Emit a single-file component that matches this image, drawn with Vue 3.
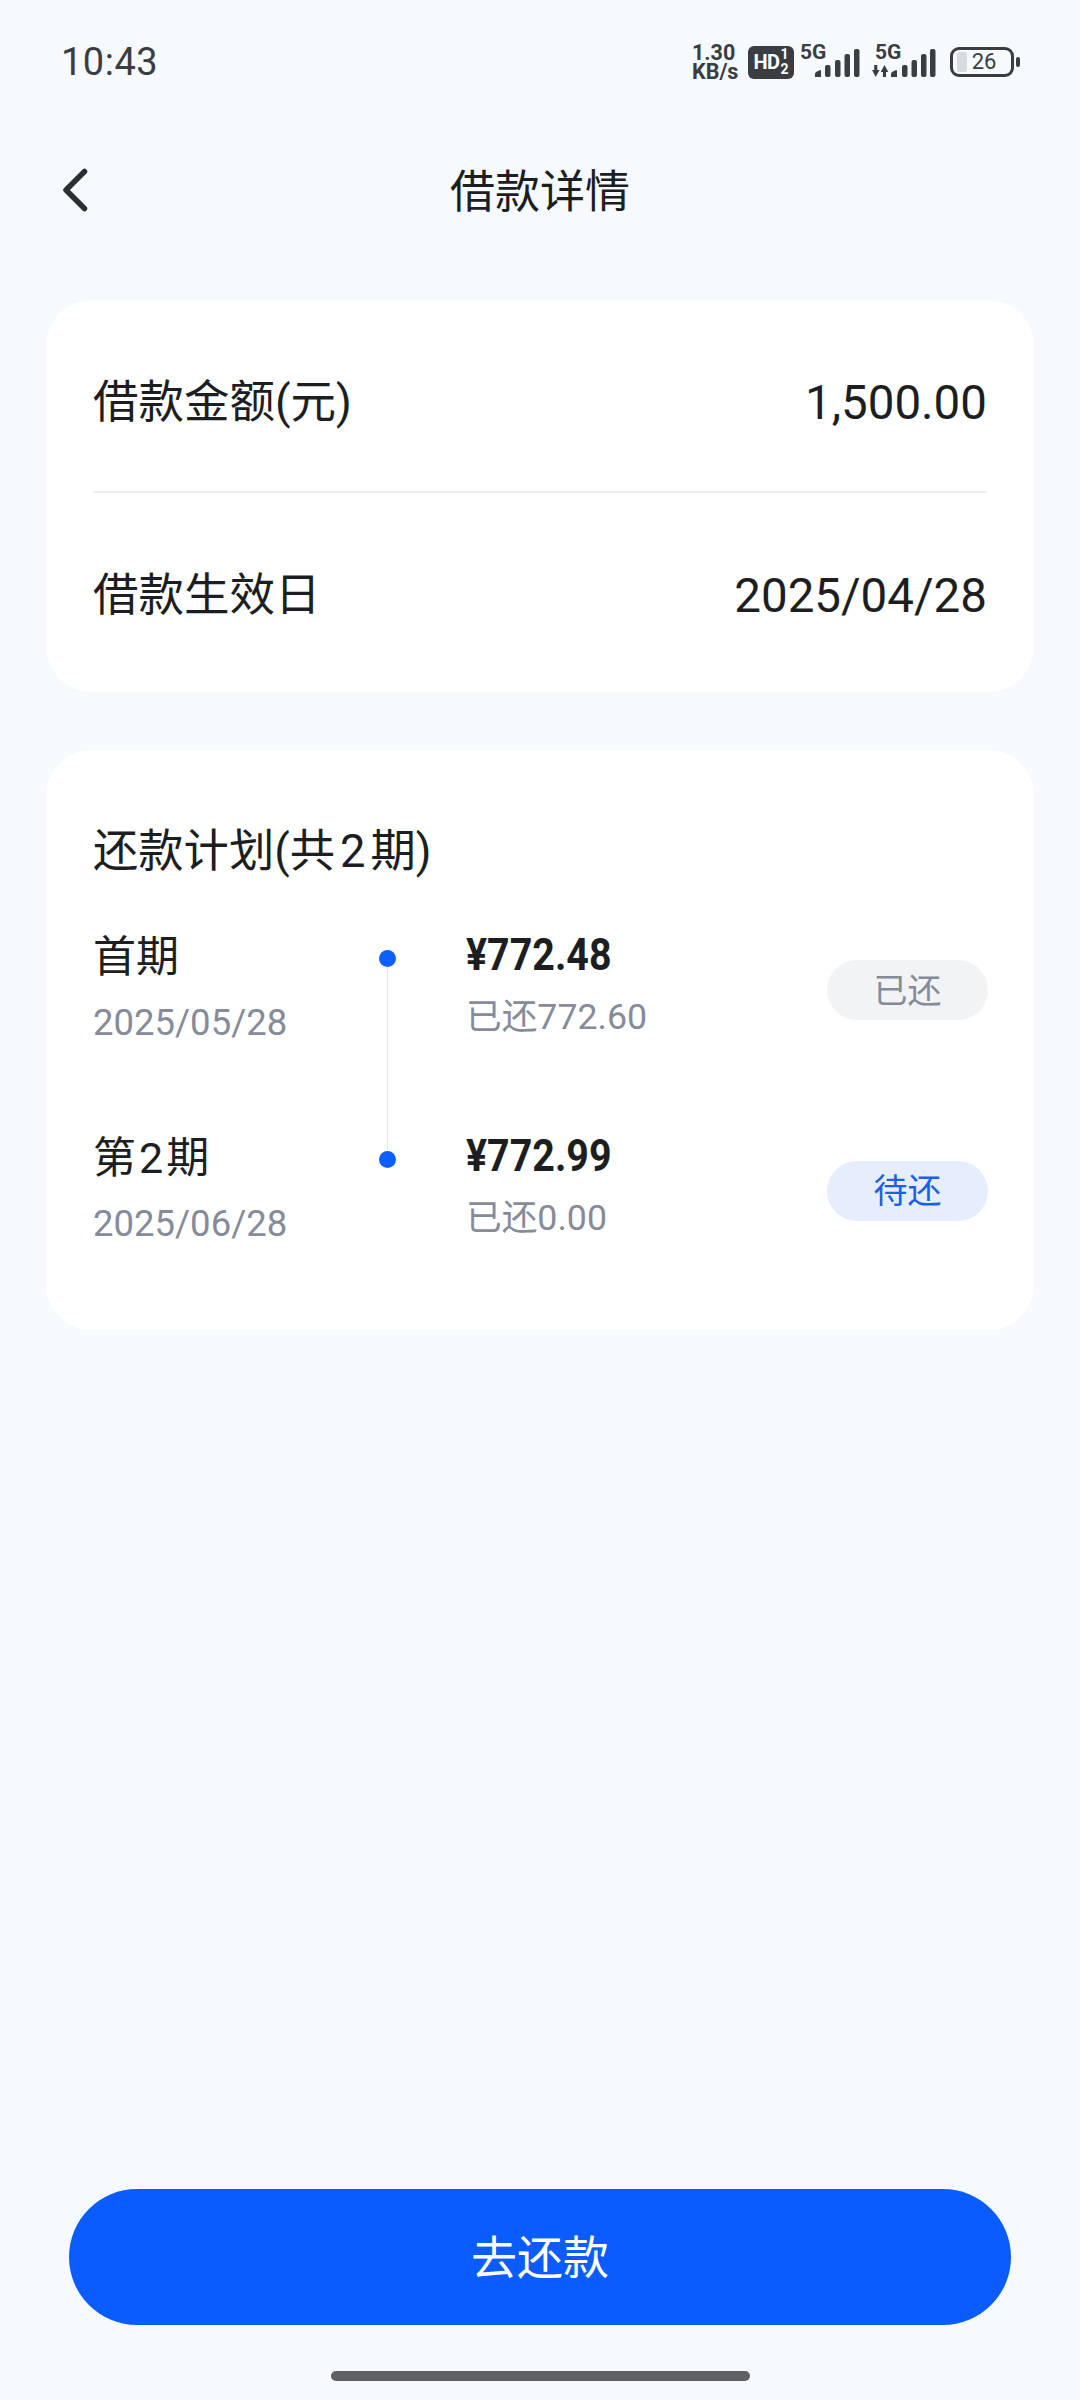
<template>
  <div class="page">
    <div class="status-bar">
      <span class="time">10:43</span>
      <div class="status-icons">
        <div class="speed"><span>1.30</span><span>KB/s</span></div>
        <div class="hd">
          <span class="hd-main">HD</span>
          <span class="hd-sub"><i>1</i><i>2</i></span>
        </div>
        <div class="signal">
          <span class="net">5G</span>
          <svg width="45" height="30" viewBox="0 0 45 30" class="bars">
            <path d="M0 30v-3q0-1.5 1.5-2.2l3-1.6q1.5-.6 1.5 1V30z" />
            <rect x="10" y="18" width="5.5" height="12" rx="2" />
            <rect x="20" y="13" width="5.5" height="17" rx="2" />
            <rect x="29.5" y="7" width="5.5" height="23" rx="2" />
            <rect x="39" y="2" width="5.5" height="28" rx="2" />
          </svg>
        </div>
        <div class="signal second">
          <span class="net">5G</span>
          <svg width="64" height="30" viewBox="0 0 64 30" class="bars">
            <path d="M2.2 18h3.1v5h2.2L3.7 30 0 23h2.2z" />
            <path d="M12.5 18l3.8 7h-2.3v5h-3.100v-5H8.700z" />
            <path d="M19 30v-3q0-1.5 1.5-2.2l3-1.6q1.5-.6 1.5 1V30z" />
            <rect x="30" y="18" width="5.5" height="12" rx="2" />
            <rect x="39.5" y="13" width="5.5" height="17" rx="2" />
            <rect x="49" y="7" width="5.5" height="23" rx="2" />
            <rect x="58" y="2" width="5.5" height="28" rx="2" />
          </svg>
        </div>
        <div class="battery">
          <div class="battery-body">
            <div class="battery-fill"></div>
            <span class="battery-num">26</span>
          </div>
          <div class="battery-cap"></div>
        </div>
      </div>
    </div>

    <div class="nav">
      <svg class="back" width="26" height="44" viewBox="0 0 26 44" fill="none">
        <path d="M22.5 3.5 L4 22 L22.5 40.5" stroke="#2b2e33" stroke-width="5.5" stroke-linecap="round" stroke-linejoin="round" />
      </svg>
      <span class="nav-title">借款详情</span>
    </div>

    <div class="card info-card">
      <div class="info-row first">
        <span class="info-label">借款金额(元)</span>
        <span class="info-value">1,500.00</span>
      </div>
      <div class="info-row">
        <span class="info-label">借款生效日</span>
        <span class="info-value">2025/04/28</span>
      </div>
    </div>

    <div class="card plan-card">
      <div class="plan-title">还款计划(共<span class="num-gap">2</span>期)</div>
      <div
        v-for="(item, i) in plans"
        :key="item.date"
        class="plan-row"
      >
        <div class="plan-left">
          <div class="plan-name">
            {{ item.prefix }}<span v-if="item.num" class="name-gap">{{ item.num }}</span>期
          </div>
          <div class="plan-date">{{ item.date }}</div>
        </div>
        <div class="plan-dot" :class="{ 'has-line': i < plans.length - 1 }"></div>
        <div class="plan-mid">
          <div class="plan-amount">{{ item.amount }}</div>
          <div class="plan-paid">{{ item.paid }}</div>
        </div>
        <div class="pill" :class="item.tone">{{ item.status }}</div>
      </div>
    </div>

    <div class="spacer"></div>

    <div class="footer">
      <button class="pay-btn">去还款</button>
    </div>
    <div class="home-bar"></div>
  </div>
</template>

<script setup>
const plans = [
  {
    prefix: "首",
    num: "",
    date: "2025/05/28",
    amount: "¥772.48",
    paid: "已还772.60",
    status: "已还",
    tone: "done",
  },
  {
    prefix: "第",
    num: "2",
    date: "2025/06/28",
    amount: "¥772.99",
    paid: "已还0.00",
    status: "待还",
    tone: "todo",
  },
];
</script>

<style>
html,
body {
  margin: 0;
  background: #f6faff;
}
</style>

<style scoped>
.page {
  height: 2400px;
  display: flex;
  flex-direction: column;
  background: #f6faff;
  font-family: Roboto, "Noto Sans CJK SC", sans-serif;
  color: #1c1e21;
  overflow: hidden;
}
.status-bar {
  height: 124px;
  flex: none;
  display: flex;
  align-items: center;
  justify-content: space-between;
  padding: 0 61px;
  padding-right: 60px;
  box-sizing: border-box;
}
.time {
  font-size: 38px;
  color: #3a3d42;
  letter-spacing: 0.5px;
}
.status-icons {
  display: flex;
  align-items: center;
  color: #3a3d42;
}
.speed {
  display: flex;
  flex-direction: column;
  font-size: 21.5px;
  font-weight: 700;
  line-height: 19px;
  width: 48px;
  margin-right: 8px;
  white-space: nowrap;
}
.hd {
  width: 46px;
  height: 33px;
  border-radius: 6px;
  background: #3a3d42;
  color: #fff;
  display: flex;
  align-items: center;
  justify-content: center;
  font-weight: 700;
  margin-right: 6px;
}
.hd-main {
  font-size: 20px;
  letter-spacing: -0.5px;
}
.hd-sub {
  display: flex;
  flex-direction: column;
  font-size: 14px;
  line-height: 15px;
  margin-left: 1px;
}
.hd-sub i {
  font-style: normal;
}
.signal {
  position: relative;
  width: 60px;
  height: 34px;
  margin-right: 12px;
}
.signal.second {
  width: 64px;
  margin-right: 14px;
}
.net {
  position: absolute;
  left: 0;
  top: -4px;
  font-size: 21px;
  font-weight: 700;
  line-height: 22px;
}
.signal.second .net {
  left: 3px;
}
.bars {
  position: absolute;
  right: 0;
  bottom: 2px;
  fill: #3a3d42;
}
.battery {
  display: flex;
  align-items: center;
  gap: 2px;
}
.battery-body {
  position: relative;
  width: 64px;
  height: 30px;
  border: 3px solid #3a3d42;
  border-radius: 9px;
  box-sizing: border-box;
  display: flex;
  align-items: center;
  justify-content: center;
}
.battery-fill {
  position: absolute;
  left: 4px;
  top: 2px;
  bottom: 2px;
  width: 10px;
  background: #d9dbe0;
  border-radius: 2px;
}
.battery-num {
  position: relative;
  font-size: 22px;
  font-weight: 400;
  line-height: 1;
  left: 2px;
}
.battery-cap {
  width: 4px;
  height: 10px;
  background: #3a3d42;
  border-radius: 2px;
}
.nav {
  position: relative;
  flex: none;
  height: 132px;
  display: flex;
  align-items: center;
  justify-content: center;
  padding-bottom: 3px;
  box-sizing: border-box;
}
.back {
  position: absolute;
  left: 62px;
  top: 44px;
}
.nav-title {
  font-size: 45px;
  color: #1c1e21;
}
.card {
  flex: none;
  margin: 0 46px;
  background: #fff;
  border-radius: 46px;
}
.info-card {
  margin-top: 44px;
  padding: 0 47px;
  height: 392px;
  box-sizing: border-box;
  display: flex;
  flex-direction: column;
}
.info-row {
  display: flex;
  align-items: flex-start;
  justify-content: space-between;
  padding-top: 73px;
  line-height: 60px;
}
.info-row.first {
  padding-bottom: 58px;
  border-bottom: 2px solid #eceef1;
}
.info-label {
  font-size: 45.5px;
}
.info-value {
  font-size: 47.5px;
}
.plan-card {
  margin-top: 58px;
  padding: 73px 47px 0;
  height: 580px;
  box-sizing: border-box;
}
.plan-title {
  font-size: 45.3px;
  line-height: 58px;
  margin-bottom: 47px;
}
.num-gap {
  margin: 0 5px;
}
.name-gap {
  margin: 0 3px;
}
.plan-row {
  display: flex;
  height: 200.5px;
}
.plan-left {
  width: 286px;
  flex: none;
}
.plan-name {
  font-size: 43px;
  line-height: 58px;
}
.plan-date {
  font-size: 36.5px;
  line-height: 50px;
  margin-top: 12px;
  color: #858b99;
}
.plan-dot {
  position: relative;
  flex: none;
  width: 17px;
  height: 17px;
  margin-top: 22px;
  margin-right: 70px;
  background: #0d5fff;
  border-radius: 50%;
}
.plan-dot.has-line::after {
  content: "";
  position: absolute;
  left: 8px;
  top: 17px;
  width: 1px;
  height: 183px;
  background: #e3e5ea;
}
.plan-mid {
  flex: 1;
}
.plan-amount {
  font-size: 45px;
  font-weight: 700;
  line-height: 50px;
  margin-top: 2px;
  transform: scaleX(0.875);
  transform-origin: left center;
}
.plan-paid {
  font-size: 35.7px;
  line-height: 50px;
  margin-top: 12px;
  color: #858b99;
}
.pill {
  flex: none;
  width: 161px;
  height: 60px;
  margin-top: 32px;
  margin-right: -1px;
  padding-bottom: 4px;
  box-sizing: border-box;
  border-radius: 30px;
  display: flex;
  align-items: center;
  justify-content: center;
  font-size: 34px;
}
.pill.done {
  background: #f2f3f5;
  color: #858b99;
}
.pill.todo {
  background: #e6eefd;
  color: #1a5fe8;
}
.spacer {
  flex: 1;
}
.footer {
  flex: none;
  padding: 0 69px;
}
.pay-btn {
  display: block;
  width: 100%;
  height: 136px;
  padding: 0 0 6px;
  border: none;
  border-radius: 68px;
  background: #0a5cff;
  color: #fff;
  font-family: inherit;
  font-size: 46px;
}
.home-bar {
  flex: none;
  align-self: center;
  width: 419px;
  height: 10px;
  margin: 46px 0 19px;
  border-radius: 5px;
  background: #5f6065;
}
</style>
